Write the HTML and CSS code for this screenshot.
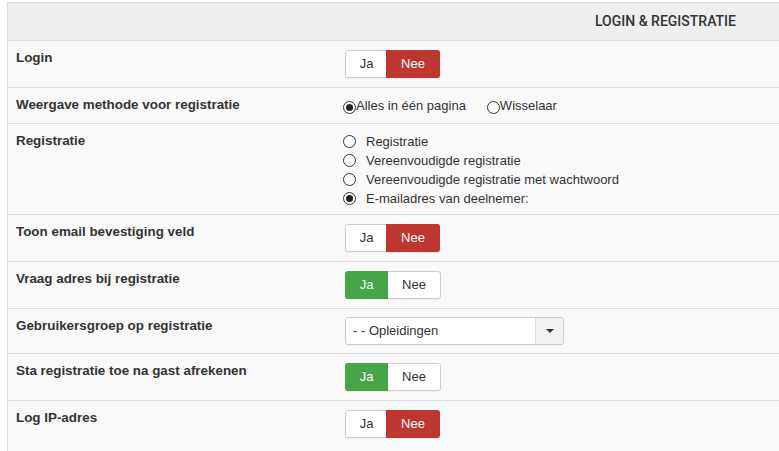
FILE: index.html
```html
<!DOCTYPE html>
<html lang="nl">
<head>
    <meta charset="UTF-8">
    <title>Login &amp; Registratie</title>
    <link rel="stylesheet" href="styles.css">
</head>
<body>

    <div class="panel">
        <div class="panel-head"><span class="title">LOGIN &amp; REGISTRATIE</span></div>

        <!-- Login -->
        <div class="row">
            <div class="label">Login</div>
            <div class="field">
                <div class="toggle"><span class="opt">Ja</span><span class="opt no on">Nee</span></div>
            </div>
        </div>

        <div class="row">
            <div class="label">Weergave methode voor registratie</div>
            <div class="field radios-inline">
                <label class="radio"><span class="dot checked"></span>Alles in één pagina</label>
                <label class="radio"><span class="dot"></span>Wisselaar</label>
            </div>
        </div>

        <div class="row">
            <div class="label">Registratie</div>
            <div class="field radios-list">
                <label class="radio"><span class="dot"></span>Registratie</label>
                <label class="radio"><span class="dot"></span>Vereenvoudigde registratie</label>
                <label class="radio"><span class="dot"></span>Vereenvoudigde registratie met wachtwoord</label>
                <label class="radio"><span class="dot checked"></span>E-mailadres van deelnemer:</label>
            </div>
        </div>

        <div class="row">
            <div class="label">Toon email bevestiging veld</div>
            <div class="field">
                <div class="toggle"><span class="opt">Ja</span><span class="opt no on">Nee</span></div>
            </div>
        </div>

        <div class="row">
            <div class="label">Vraag adres bij registratie</div>
            <div class="field">
                <div class="toggle"><span class="opt yes on">Ja</span><span class="opt">Nee</span></div>
            </div>
        </div>

        <div class="row row-select">
            <div class="label">Gebruikersgroep op registratie</div>
            <div class="field">
                <div class="select">
                    <span class="select-text">- - Opleidingen</span>
                    <span class="select-btn"><span class="caret"></span></span>
                </div>
            </div>
        </div>

        <div class="row">
            <div class="label">Sta registratie toe na gast afrekenen</div>
            <div class="field">
                <div class="toggle"><span class="opt yes on">Ja</span><span class="opt">Nee</span></div>
            </div>
        </div>

        <div class="row">
            <div class="label">Log IP-adres</div>
            <div class="field">
                <div class="toggle"><span class="opt">Ja</span><span class="opt no on">Nee</span></div>
            </div>
        </div>
    </div>

</body>
</html>
```

FILE: styles.css
```css
body {
    margin: 2px 0 0 7px;
    background: #fff;
    font-family: "Liberation Sans", Arial, sans-serif;
    font-size: 13px;
    color: #333;
    overflow: hidden;
}
.panel {
    border-top: 1px solid #ddd;
    border-left: 1px solid #ddd;
    background: #f9f9f9;
    min-height: 460px;
}
.panel-head {
    height: 37px;
    background: #efefef;
    text-align: right;
    padding-right: 43px;
    line-height: 37px;
}
.title {
    display: inline-block;
    font-family: Roboto, sans-serif;
    font-weight: 500;
    font-size: 14px;
    color: #333;
}
.row {
    display: grid;
    grid-template-columns: 337px 1fr;
    border-top: 1px solid #ddd;
}
.label {
    padding: 9px 8px;
    line-height: 16px;
    font-size: 13.4px;
    font-weight: bold;
}
.field {
    padding: 9px 0;
}
.row-select .field {
    padding: 8px 0;
}
.toggle {
    display: inline-flex;
    height: 28px;
    border: 1px solid #ccc;
    border-radius: 3px;
    box-sizing: border-box;
    background: #fff;
    box-shadow: 0 1px 1px rgba(0, 0, 0, 0.05);
}
.opt {
    display: block;
    line-height: 26px;
    text-align: center;
    width: 41px;
}
.opt + .opt {
    width: 52px;
}
.opt.on {
    color: #fff;
    margin: -1px;
    line-height: 28px;
}
.opt.no.on {
    background: #bd362f;
    border-radius: 0 3px 3px 0;
    width: 54px;
}
.opt.yes.on {
    background: #46a546;
    border-radius: 3px 0 0 3px;
    width: 43px;
    margin-right: 0;
}
.radios-inline {
    display: flex;
    gap: 21px;
    padding: 9px 0 9px 0;
    margin-left: -2px;
    line-height: 17px;
}
.radios-inline .radio {
    display: flex;
    align-items: center;
}
.radios-inline .dot {
    margin-top: 3px;
}
.radios-list {
    padding: 8px 0 6px;
    margin-left: -2px;
}
.radios-list .radio {
    display: flex;
    align-items: center;
    height: 19px;
}
.radios-list .dot {
    margin-right: 10px;
}
.dot {
    width: 13px;
    height: 13px;
    box-sizing: border-box;
    border: 1px solid #333;
    border-radius: 50%;
    background: #fff;
    position: relative;
    flex: none;
}
.dot.checked::after {
    content: "";
    position: absolute;
    left: 2px;
    top: 2px;
    width: 7px;
    height: 7px;
    border-radius: 50%;
    background: #222;
}
.select {
    display: flex;
    width: 219px;
    height: 28px;
    box-sizing: border-box;
    border: 1px solid #ccc;
    border-radius: 3px;
    background: #fff;
    box-shadow: 0 1px 1px rgba(0, 0, 0, 0.05);
}
.select-text {
    flex: 1;
    padding-left: 7px;
    line-height: 26px;
    font-size: 13px;
}
.select-btn {
    width: 27px;
    border-left: 1px solid #ddd;
    background: #f2f2f2;
    border-radius: 0 3px 3px 0;
    display: flex;
    align-items: center;
    justify-content: center;
}
.caret {
    width: 0;
    height: 0;
    border-left: 4px solid transparent;
    border-right: 4px solid transparent;
    border-top: 4px solid #333;
}
```
